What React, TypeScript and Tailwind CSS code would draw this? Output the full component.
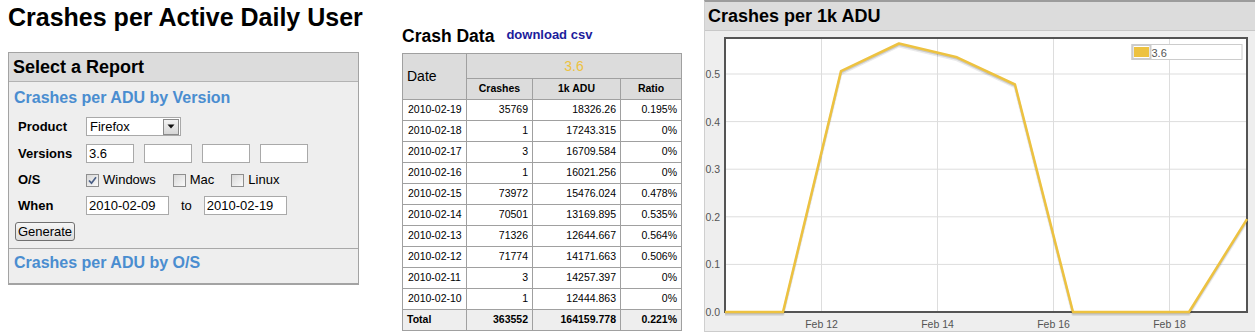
import React from "react";

const rows: [string, string, string, string][] = [
  ["2010-02-19", "35769", "18326.26", "0.195%"],
  ["2010-02-18", "1", "17243.315", "0%"],
  ["2010-02-17", "3", "16709.584", "0%"],
  ["2010-02-16", "1", "16021.256", "0%"],
  ["2010-02-15", "73972", "15476.024", "0.478%"],
  ["2010-02-14", "70501", "13169.895", "0.535%"],
  ["2010-02-13", "71326", "12644.667", "0.564%"],
  ["2010-02-12", "71774", "14171.663", "0.506%"],
  ["2010-02-11", "3", "14257.397", "0%"],
  ["2010-02-10", "1", "12444.863", "0%"],
];

const series = [0, 0, 0.506, 0.564, 0.535, 0.478, 0, 0, 0, 0.195];

function Checkbox({ checked }: { checked?: boolean }) {
  return (
    <span className="flex h-[13px] w-[13px] items-center justify-center border border-[#8f8f8f] bg-gradient-to-br from-[#d8d8d8] to-[#fafafa]">
      {checked && (
        <svg width="11" height="11" viewBox="0 0 11 11">
          <path d="M2 5.5 L4.5 8.2 L9 2.2" fill="none" stroke="#4a5f86" strokeWidth="1.7" />
        </svg>
      )}
    </span>
  );
}

function TextInput({ value, w }: { value: string; w: string }) {
  return (
    <input
      readOnly
      value={value}
      className={`${w} h-[19px] border border-[#a9a9a9] bg-white px-[2px] text-[13px] leading-[17px] text-black outline-none`}
    />
  );
}

function Chart() {
  const left = 20;
  const bottom = 281;
  const pts = series.map((v, i) => `${left + 58 * i},${(bottom - v * 476).toFixed(1)}`).join(" ");
  const hLines = [1, 2, 3, 4, 5].map((k) => bottom - 47.6 * k);
  const yLabels = ["0.0", "0.1", "0.2", "0.3", "0.4", "0.5"];
  const xTicks: [number, string][] = [
    [116, "Feb 12"],
    [232, "Feb 14"],
    [348, "Feb 16"],
    [464, "Feb 18"],
  ];
  return (
    <svg width="550" height="300" viewBox="0 0 550 300" className="block">
      <rect x="20" y="7" width="522" height="274" fill="#ffffff" />
      {hLines.map((y) => (
        <line key={y} x1="20" x2="542" y1={y} y2={y} stroke="#dddddd" strokeWidth="1" />
      ))}
      {xTicks.map(([x]) => (
        <line key={x} x1={x + 0.5} x2={x + 0.5} y1="7" y2="281" stroke="#dddddd" strokeWidth="1" />
      ))}
      <rect x="20" y="7" width="522" height="274" fill="none" stroke="#545454" strokeWidth="2" />
      {yLabels.map((t, k) => (
        <text
          key={t}
          x="0.5"
          y={bottom - 47.6 * k + 4}
          fontSize="10.5"
          fill="#545454"
          fontFamily="'Liberation Sans', Arial, sans-serif"
        >
          {t}
        </text>
      ))}
      {xTicks.map(([x, t]) => (
        <text
          key={t}
          x={x + 0.5}
          y="297"
          textAnchor="middle"
          fontSize="10.5"
          fill="#545454"
          fontFamily="'Liberation Sans', Arial, sans-serif"
        >
          {t}
        </text>
      ))}
      <polyline points={pts} transform="translate(0,2.5)" fill="none" stroke="rgba(0,0,0,0.08)" strokeWidth="3" strokeLinejoin="round" />
      <polyline points={pts} transform="translate(0,1.5)" fill="none" stroke="rgba(0,0,0,0.14)" strokeWidth="2" strokeLinejoin="round" />
      <polyline points={pts} fill="none" stroke="#edc240" strokeWidth="2.5" strokeLinejoin="round" />
      <rect x="427" y="13.5" width="110" height="15" fill="#ffffff" stroke="#cccccc" strokeWidth="1" />
      <rect x="427.5" y="14" width="18" height="14" fill="#ffffff" stroke="#cccccc" strokeWidth="2" />
      <rect x="429" y="16" width="15" height="10" fill="#edc240" />
      <text x="446.5" y="25.5" fontSize="11" fill="#545454" fontFamily="'Liberation Sans', Arial, sans-serif">
        3.6
      </text>
    </svg>
  );
}

export default function App() {
  return (
    <div className="flex h-[333px] w-[1255px] items-start overflow-hidden bg-white font-['Liberation_Sans',Arial,Helvetica,sans-serif] text-black">
      {/* Left column */}
      <div className="ml-[8px] w-[351px] shrink-0">
        <h1 className="mt-[3px] h-[28px] whitespace-nowrap text-[25px] font-bold leading-[28px]">
          Crashes per Active Daily User
        </h1>
        <div className="mt-[21px] border border-b-2 border-[#a3a3a3] bg-[#eeeeee]">
          <div className="h-[29px] border-b border-[#b3b3b3] bg-[#dcdcdc] pl-[4px] text-[18px] font-bold leading-[28px]">
            Select a Report
          </div>
          <div className="mt-[6px] h-[20px] pl-[5px] text-[16px] font-bold leading-[20px] text-[#4a8dd0]">
            Crashes per ADU by Version
          </div>
          <div className="mt-[9px] flex h-[19px] items-center">
            <span className="ml-[9px] w-[68px] text-[13px] font-bold">Product</span>
            <div className="flex h-[19px] w-[95px] items-center justify-between border border-[#a9a9a9] bg-white pl-[3px] pr-[1px]">
              <span className="text-[13px] leading-[17px]">Firefox</span>
              <span className="flex h-[16px] w-[16px] items-center justify-center border border-[#8a8a8a] bg-gradient-to-b from-[#f3f3f3] to-[#d6d6d6]">
                <svg width="8" height="5" viewBox="0 0 8 5">
                  <path d="M0.5 0.5 L7.5 0.5 L4 4.5 Z" fill="#111111" />
                </svg>
              </span>
            </div>
          </div>
          <div className="mt-[8px] flex h-[19px] items-center">
            <span className="ml-[9px] w-[68px] text-[13px] font-bold">Versions</span>
            <div className="flex gap-[10px]">
              <TextInput value="3.6" w="w-[48px]" />
              <TextInput value="" w="w-[48px]" />
              <TextInput value="" w="w-[48px]" />
              <TextInput value="" w="w-[48px]" />
            </div>
          </div>
          <div className="mt-[7px] flex h-[20px] items-center">
            <span className="ml-[9px] w-[68px] text-[13px] font-bold">O/S</span>
            <div className="flex items-center gap-[17px] text-[13px]">
              <span className="flex items-center gap-[4px]">
                <Checkbox checked />
                <span>Windows</span>
              </span>
              <span className="flex items-center gap-[4px]">
                <Checkbox />
                <span>Mac</span>
              </span>
              <span className="flex items-center gap-[4px]">
                <Checkbox />
                <span>Linux</span>
              </span>
            </div>
          </div>
          <div className="mt-[6px] flex h-[19px] items-center">
            <span className="ml-[9px] w-[68px] text-[13px] font-bold">When</span>
            <TextInput value="2010-02-09" w="w-[83px]" />
            <span className="mx-[12px] text-[13px]">to</span>
            <TextInput value="2010-02-19" w="w-[83px]" />
          </div>
          <div className="mt-[7px] flex h-[19px] pl-[6px]">
            <button className="h-[19px] w-[60px] rounded-[3px] border border-[#707070] bg-gradient-to-b from-[#f6f6f6] to-[#dcdcdc] text-[13px] leading-[17px] text-black">
              Generate
            </button>
          </div>
          <div className="mt-[7px] border-t border-[#a8a8a8]" />
          <div className="mt-[4px] h-[20px] pl-[5px] text-[16px] font-bold leading-[20px] text-[#4a8dd0]">
            Crashes per ADU by O/S
          </div>
          <div className="h-[10px]" />
        </div>
      </div>

      {/* Middle column */}
      <div className="ml-[43px] w-[279px] shrink-0">
        <div className="mt-[26px] flex items-start">
          <h2 className="text-[17.5px] font-bold leading-[20px]">Crash Data</h2>
          <a className="ml-[12px] mt-[1px] text-[13px] font-bold leading-[16px] text-[#1c1c9c]">download csv</a>
        </div>
        <table className="mt-[7px] w-[279px] table-fixed border-collapse border border-[#a0a0a0] text-[10.5px]">
          <colgroup>
            <col className="w-[64px]" />
            <col className="w-[66px]" />
            <col className="w-[88px]" />
            <col className="w-[61px]" />
          </colgroup>
          <thead>
            <tr className="h-[25px] bg-[#dcdcdc]">
              <th rowSpan={2} className="border border-[#a0a0a0] pl-[4px] text-left text-[14px] font-normal">
                Date
              </th>
              <th colSpan={3} className="border border-[#a0a0a0] text-center text-[14px] font-normal text-[#edc240]">
                3.6
              </th>
            </tr>
            <tr className="h-[21px] bg-[#dcdcdc]">
              <th className="border border-[#a0a0a0] text-center font-bold">Crashes</th>
              <th className="border border-[#a0a0a0] text-center font-bold">1k ADU</th>
              <th className="border border-[#a0a0a0] text-center font-bold">Ratio</th>
            </tr>
          </thead>
          <tbody>
            {rows.map((r) => (
              <tr key={r[0]} className="h-[21px]">
                <td className="border border-[#a0a0a0] pl-[5px]">{r[0]}</td>
                <td className="border border-[#a0a0a0] pr-[4px] text-right">{r[1]}</td>
                <td className="border border-[#a0a0a0] pr-[4px] text-right">{r[2]}</td>
                <td className="border border-[#a0a0a0] pr-[4px] text-right">{r[3]}</td>
              </tr>
            ))}
            <tr className="h-[21px] bg-[#eeeeee] font-bold">
              <td className="border border-[#a0a0a0] pl-[4px]">Total</td>
              <td className="border border-[#a0a0a0] pr-[4px] text-right">363552</td>
              <td className="border border-[#a0a0a0] pr-[4px] text-right">164159.778</td>
              <td className="border border-[#a0a0a0] pr-[4px] text-right">0.221%</td>
            </tr>
          </tbody>
        </table>
      </div>

      {/* Chart column */}
      <div className="ml-[23px] w-[560px] shrink-0 border-l border-t-2 border-l-[#cfcfcf] border-t-[#9c9c9c]">
        <div className="h-[29px] border-b border-[#c8c8c8] bg-[#dcdcdc] pl-[3px] text-[18px] font-bold leading-[28px]">
          Crashes per 1k ADU
        </div>
        <div className="h-[301px] border-b border-[#cccccc] bg-[#eeeeee]">
          <Chart />
        </div>
      </div>
    </div>
  );
}
